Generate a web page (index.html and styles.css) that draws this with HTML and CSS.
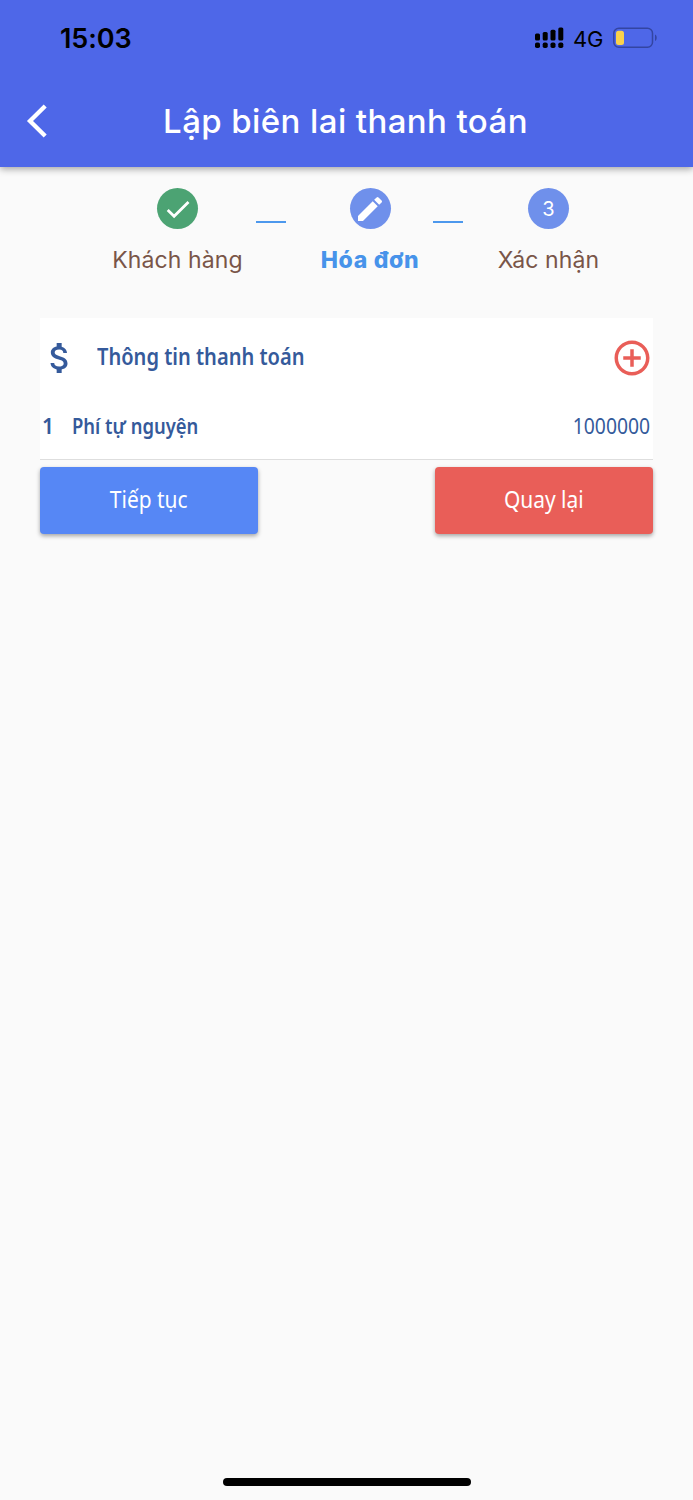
FILE: index.html
```html
<!DOCTYPE html>
<html lang="vi">
<head>
<meta charset="utf-8">
<title>Lập biên lai thanh toán</title>
<link rel="stylesheet" href="styles.css">
</head>
<body>
<div class="screen">
  <header class="header">
    <div class="status">
      <span class="clock">15:03</span>
      <svg class="signal" width="30" height="22" viewBox="0 0 30 22">
        <rect x="1" y="6.500" width="5" height="7" rx="1.500"/><rect x="8.700" y="5" width="5" height="8.500" rx="1.500"/><rect x="16.500" y="2.800" width="5" height="10.700" rx="1.500"/><rect x="24.300" y="0.500" width="5" height="13" rx="1.500"/>
        <rect x="1" y="15.500" width="5" height="5.500" rx="1.800"/><rect x="8.700" y="15.500" width="5" height="5.500" rx="1.800"/><rect x="16.500" y="15.500" width="5" height="5.500" rx="1.800"/><rect x="24.300" y="15.500" width="5" height="5.500" rx="1.800"/>
      </svg>
      <span class="network">4G</span>
      <svg class="battery" width="44" height="22" viewBox="0 0 44 22">
        <rect x="0.800" y="1.300" width="38.700" height="18.900" rx="5" fill="none" stroke="#3345a2" stroke-width="1.500"/>
        <rect x="3" y="3.800" width="8" height="14.200" rx="2.500" fill="#fad14b"/>
        <path d="M42 7.500C44.300 8.700 44.300 12.800 42 14Z" fill="#3345a2"/>
      </svg>
    </div>
    <div class="titlebar">
      <svg class="back" width="22" height="34" viewBox="0 0 22 34"><path d="M19.200 2 4 17l15.200 15" fill="none" stroke="#fff" stroke-width="4.300"/></svg>
      <h1 class="title">Lập biên lai thanh toán</h1>
    </div>
  </header>

  <nav class="steps">
    <div class="step step-customer">
      <span class="dot dot-done"><svg width="40" height="40" viewBox="0 0 40 40"><path d="m9.700 21 6.400 6.200L30.500 13" fill="none" stroke="#fff" stroke-width="2.800"/></svg></span>
      <span class="label">Khách hàng</span>
    </div>
    <span class="link link-first"></span>
    <div class="step step-invoice">
      <span class="dot"><svg width="32" height="32" viewBox="0 0 24 24"><path fill="#fff" d="M3 17.250V21h3.750L17.810 9.940l-3.750-3.750L3 17.250zM20.710 7.040a1 1 0 0 0 0-1.410l-2.340-2.340a1 1 0 0 0-1.410 0l-1.830 1.830 3.750 3.750 1.830-1.830z"/></svg></span>
      <span class="label label-active">Hóa đơn</span>
    </div>
    <span class="link link-second"></span>
    <div class="step step-confirm">
      <span class="dot">3</span>
      <span class="label">Xác nhận</span>
    </div>
  </nav>

  <main class="content">
    <section class="card">
      <div class="card-head">
        <svg class="dollar" width="40" height="40" viewBox="0 0 24 24"><path fill="#355a9b" d="M11.800 10.900c-2.270-.59-3-1.200-3-2.150 0-1.090 1.010-1.850 2.700-1.850 1.780 0 2.440.85 2.500 2.100h2.210c-.07-1.720-1.120-3.300-3.210-3.810V3h-3v2.160c-1.940.42-3.500 1.680-3.500 3.610 0 2.310 1.910 3.460 4.700 4.130 2.500.6 3 1.480 3 2.410 0 .69-.49 1.790-2.700 1.790-2.060 0-2.870-.92-2.980-2.100h-2.200c.12 2.190 1.760 3.420 3.680 3.830V21h3v-2.150c1.950-.37 3.500-1.500 3.500-3.550 0-2.840-2.430-3.810-4.700-4.400z"/></svg>
        <h2 class="card-title">Thông tin thanh toán</h2>
        <svg class="add" width="42" height="42" viewBox="0 0 24 24"><path fill="#e95e58" d="M13 7h-2v4H7v2h4v4h2v-4h4v-2h-4V7zm-1-5C6.480 2 2 6.480 2 12s4.480 10 10 10 10-4.480 10-10S17.520 2 12 2zm0 18c-4.410 0-8-3.590-8-8s3.590-8 8-8 8 3.590 8 8-3.590 8-8 8z"/></svg>
      </div>
      <div class="fee">
        <span class="fee-index">1</span>
        <span class="fee-name">Phí tự nguyện</span>
        <span class="fee-amount">1000000</span>
      </div>
    </section>
    <div class="actions">
      <button class="button button-next"><span class="button-text">Tiếp tục</span></button>
      <button class="button button-back"><span class="button-text">Quay lại</span></button>
    </div>
  </main>
  <div class="home-bar"></div>
</div>
</body>
</html>
```
FILE: styles.css
```css
* { box-sizing: border-box; }
body { margin: 0; background: #fafafa; font-family: Inter, "Liberation Sans", sans-serif; }
.screen { display: flex; flex-direction: column; width: 693px; height: 1500px; overflow: hidden; }
svg { display: block; flex: none; }
h1, h2 { margin: 0; }

.header { height: 167px; background: #4e67e8; box-shadow: 0 2px 7px rgba(0, 0, 0, .36); flex: none; }
.status { display: flex; align-items: center; height: 76px; padding: 0 36px 0 60px; }
.clock { flex: 1; font-size: 27px; font-weight: 600; letter-spacing: -.1px; }
.network { margin: 2px 10px 0 9px; width: 30px; font-size: 22px; letter-spacing: -.3px; white-space: nowrap; }
.titlebar { display: flex; align-items: center; height: 91px; padding: 0 26px 2px; }
.title { flex: 1; padding-right: 24px; text-align: center; color: #fff; font-size: 33px; font-weight: 500; letter-spacing: .4px; white-space: nowrap; }

.steps { display: flex; align-items: flex-start; height: 151px; padding: 21px 0 0 112px; flex: none; }
.step { display: flex; flex-direction: column; align-items: center; }
.step-customer { width: 131px; }
.step-invoice { width: 100px; }
.step-confirm { width: 101px; }
.dot { display: flex; align-items: center; justify-content: center; width: 41px; height: 41px; border-radius: 50%; background: #6f90eb; color: #fff; font-size: 20px; }
.dot-done { background: #4ca373; }
.label { margin-top: 16px; line-height: 30px; color: #795548; font-size: 23px; letter-spacing: .1px; white-space: nowrap; }
.label-active { color: #4793ea; font-weight: 800; letter-spacing: .7px; }
.link { width: 30px; height: 2px; margin-top: 33px; background: #4c98ed; }
.link-first { margin-left: 13px; margin-right: 34px; }
.link-second { margin-left: 13px; margin-right: 35px; }

.content { flex: 1; padding: 0 40px; font-family: "Noto Sans", "Open Sans", sans-serif; }
.card { height: 142px; background: #fff; border-bottom: 1.500px solid #dedede; color: #355a9b; }
.card-head { display: flex; align-items: center; height: 80px; }
.card-title { flex: 1; margin: -4px 0 0 17px; font-size: 23px; font-weight: 600; transform: scaleX(.872); transform-origin: left; white-space: nowrap; }
.fee { display: flex; align-items: center; height: 56px; padding: 0 3px 0 2px; font-size: 21px; white-space: nowrap; }
.fee-index { width: 30px; font-weight: 600; }
.fee-name { flex: 1; font-weight: 600; transform: scaleX(.877); transform-origin: left; }
.fee-amount { transform: scaleX(.92); transform-origin: right; }
.actions { display: flex; justify-content: space-between; padding-top: 7px; }
.button { width: 218px; height: 67px; padding: 0 0 3px; border: 0; border-radius: 4px; color: #fff; font: 23px "Noto Sans", "Open Sans", sans-serif; box-shadow: 0 2px 4px rgba(0, 0, 0, .35); }
.button-next { background: #5687f5; }
.button-back { background: #e95e58; }
.button-text { display: inline-block; transform: scaleX(.91); }
.home-bar { width: 248px; height: 8px; margin: 0 auto 14px; border-radius: 4px; background: #000; flex: none; }
```
